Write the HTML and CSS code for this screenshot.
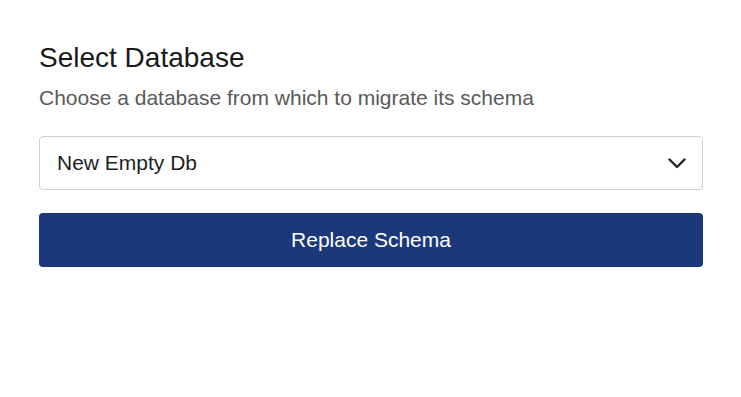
FILE: index.html
```html
<!DOCTYPE html>
<html lang="en">
<head>
<meta charset="utf-8">
<title>Select Database</title>
<link rel="stylesheet" href="styles.css">
</head>
<body>
<main class="panel">
  <h1 class="title">Select Database</h1>
  <p class="subtitle">Choose a database from which to migrate its schema</p>
  <div class="select">
    <span class="select-value">New Empty Db</span>
    <svg class="chevron" width="18" height="11" viewBox="0 0 18 11" aria-hidden="true">
      <path d="M1.5 1.5 L9 9 L16.5 1.5" fill="none" stroke="#222" stroke-width="2.4" stroke-linecap="round" stroke-linejoin="round"/>
    </svg>
  </div>
  <button class="btn" type="button">Replace Schema</button>
</main>
</body>
</html>
```
FILE: styles.css
```css
html, body {
  margin: 0;
  padding: 0;
  background: #ffffff;
}
body {
  font-family: "Liberation Sans", Arial, sans-serif;
}
.panel {
  display: flex;
  flex-direction: column;
  padding: 42px 38px 0 39px;
}
.title {
  margin: 0;
  font-size: 28px;
  line-height: 32px;
  font-weight: 400;
  color: #1a1a1a;
}
.subtitle {
  margin: 12px 0 0;
  font-size: 21px;
  line-height: 24px;
  color: #5a5a5a;
}
.select {
  margin-top: 26px;
  height: 54px;
  box-sizing: border-box;
  border: 1px solid #cfcfcf;
  border-radius: 4px;
  display: flex;
  align-items: center;
  justify-content: space-between;
  padding: 0 16px 0 17px;
}
.select-value {
  font-size: 21px;
  line-height: 24px;
  color: #1e1e1e;
}
.chevron {
  display: block;
}
.btn {
  margin-top: 23px;
  height: 54px;
  border: none;
  border-radius: 4px;
  background: #1b387a;
  color: #ffffff;
  font-family: "Liberation Sans", Arial, sans-serif;
  font-size: 21px;
  line-height: 24px;
  padding: 0;
}
```
